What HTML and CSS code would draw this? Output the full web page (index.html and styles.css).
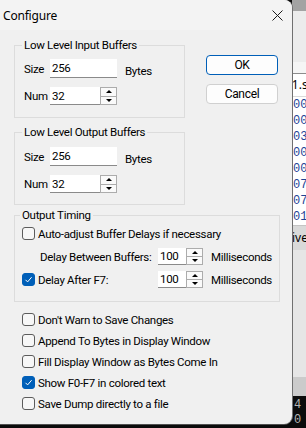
FILE: index.html
```html
<!DOCTYPE html>
<html lang="en">
<head>
    <meta charset="UTF-8">
    <meta name="viewport" content="width=device-width, initial-scale=1.0">
    <title>Configure</title>
    <link rel="stylesheet" href="styles.css">
</head>
<body>
    <div class="screen">
        <div class="dialog">
            <div class="titlebar">
                <span class="title">Configure</span>
                <svg class="close" width="11" height="11" viewBox="0 0 11 11">
                    <path d="M0.5 0.5 L10.5 10.5 M10.5 0.5 L0.5 10.5" stroke="#1b1b1b" stroke-width="1" fill="none"/>
                </svg>
            </div>
            <div class="content">
                <div class="top">
                    <div class="groups">
                        <fieldset class="group buffers">
                            <legend>Low Level Input Buffers</legend>
                            <div class="row first">
                                <label class="lbl">Size</label>
                                <input class="edit wide" value="256">
                                <span class="unit">Bytes</span>
                            </div>
                            <div class="row second">
                                <label class="lbl">Num</label>
                                <input class="edit narrow" value="32">
                                <span class="spin"><span class="up"></span><span class="down"></span></span>
                            </div>
                        </fieldset>
                        <fieldset class="group buffers out">
                            <legend>Low Level Output Buffers</legend>
                            <div class="row first">
                                <label class="lbl">Size</label>
                                <input class="edit wide" value="256">
                                <span class="unit">Bytes</span>
                            </div>
                            <div class="row second">
                                <label class="lbl">Num</label>
                                <input class="edit narrow" value="32">
                                <span class="spin"><span class="up"></span><span class="down"></span></span>
                            </div>
                        </fieldset>
                    </div>
                    <div class="buttons">
                        <button class="btn default">OK</button>
                        <button class="btn">Cancel</button>
                    </div>
                </div>

                <fieldset class="group timing">
                    <legend>Output Timing</legend>
                    <div class="check-row auto">
                        <span class="box"></span>
                        <span>Auto-adjust Buffer Delays if necessary</span>
                    </div>
                    <div class="delay-row between">
                        <span class="delay-label indent">Delay Between Buffers:</span>
                        <input class="edit delay" value="100">
                        <span class="spin small"><span class="up"></span><span class="down"></span></span>
                        <span class="unit">Milliseconds</span>
                    </div>
                    <div class="delay-row after">
                        <span class="delay-label"><span class="box checked"><svg width="11" height="11" viewBox="0 0 11 11"><path d="M2.5 5.8 L4.6 7.9 L8.6 3.2" stroke="#fff" stroke-width="1" fill="none"/></svg></span>Delay After F7:</span>
                        <input class="edit delay" value="100">
                        <span class="spin small"><span class="up"></span><span class="down"></span></span>
                        <span class="unit">Milliseconds</span>
                    </div>
                </fieldset>

                <div class="options">
                    <div class="check-row"><span class="box"></span><span>Don't Warn to Save Changes</span></div>
                    <div class="check-row"><span class="box"></span><span>Append To Bytes in Display Window</span></div>
                    <div class="check-row"><span class="box"></span><span>Fill Display Window as Bytes Come In</span></div>
                    <div class="check-row"><span class="box checked"><svg width="11" height="11" viewBox="0 0 11 11"><path d="M2.5 5.8 L4.6 7.9 L8.6 3.2" stroke="#fff" stroke-width="1" fill="none"/></svg></span><span>Show F0-F7 in colored text</span></div>
                    <div class="check-row"><span class="box"></span><span>Save Dump directly to a file</span></div>
                </div>
            </div>
        </div>

        <!-- window behind the dialog -->
        <div class="backdrop">
            <div class="bg-desk"></div>
            <div class="bg-bar"></div>
            <div class="bg-tabs"></div>
            <div class="bg-head">01.s</div>
            <div class="bg-rows">
                <div>00</div>
                <div>00</div>
                <div>03</div>
                <div>00</div>
                <div>00</div>
                <div>07</div>
                <div>07</div>
                <div>01</div>
            </div>
            <div class="bg-status">ive</div>
            <div class="bg-panel"></div>
            <div class="bg-edge"></div>
            <div class="bg-console">
                <div>4</div>
                <div>0</div>
            </div>
        </div>
    </div>
</body>
</html>
```

FILE: styles.css
```css
* {
    box-sizing: border-box;
}
body {
    margin: 0;
    background: #0b0b0b;
    font-family: Roboto, "Liberation Sans", Arial, sans-serif;
    font-size: 11.5px;
    letter-spacing: -0.3px;
    color: #000;
}
.screen {
    display: flex;
    width: 306px;
    height: 428px;
    overflow: hidden;
}
.dialog {
    width: 292px;
    height: 424px;
    flex: none;
    background: #f0f0f0;
    border-radius: 0 8px 8px 0;
    box-shadow: 1px 0 0 #707070, 0 1px 0 #505050;
    position: relative;
    z-index: 1;
    display: flex;
    flex-direction: column;
    white-space: nowrap;
}
.titlebar {
    height: 30px;
    flex: none;
    background: #f3f3f3;
    border-radius: 0 8px 0 0;
    display: flex;
    align-items: center;
    justify-content: space-between;
    padding: 0 9px 0 3px;
}
.title {
    font-family: "Noto Sans", "Open Sans", sans-serif;
    font-size: 12px;
    letter-spacing: -0.2px;
}
.close {
    display: block;
}
.content {
    padding: 8px 0 0 14px;
}
.top {
    display: flex;
}
.groups {
    width: 171px;
    display: flex;
    flex-direction: column;
    gap: 7px;
}
.group {
    margin: 0;
    min-width: 0;
    border: 1px solid #dcdcdc;
    padding: 0 0 12px 9px;
}
.group legend {
    padding: 0 2px;
    margin-left: -2px;
    line-height: 14px;
}
.group.out {
    padding-bottom: 11px;
}
.row {
    display: flex;
    align-items: center;
}
.row.first {
    height: 19px;
    margin-top: 7px;
}
.out .row.first {
    margin-top: 8px;
}
.row.second {
    height: 18px;
    margin-top: 9px;
}
.lbl {
    width: 26px;
}
.edit {
    font: inherit;
    letter-spacing: inherit;
    color: #000;
    background: #fff;
    border: none;
    border-bottom: 1px solid #8a8a8a;
    padding: 0 2px;
    margin: 0;
    outline: none;
}
.edit.wide {
    width: 67px;
    height: 19px;
}
.edit.narrow {
    width: 50px;
    height: 18px;
}
.unit {
    margin-left: 8px;
}
.row .unit {
    padding-top: 4px;
}
.spin {
    width: 17px;
    height: 18px;
    border: 1px solid #acacac;
    background: #fafafa;
    display: flex;
    flex-direction: column;
}
.spin.small {
    height: 17px;
}
.spin .up, .spin .down {
    flex: 1;
    display: flex;
    align-items: center;
    justify-content: center;
}
.spin .up {
    border-bottom: 1px solid #acacac;
}
.spin .up::after {
    content: "";
    border-left: 3px solid transparent;
    border-right: 3px solid transparent;
    border-bottom: 3px solid #000;
}
.spin .down::after {
    content: "";
    border-left: 3px solid transparent;
    border-right: 3px solid transparent;
    border-top: 3px solid #000;
}
.buttons {
    margin-left: 21px;
    padding-top: 17px;
    display: flex;
    flex-direction: column;
    gap: 9px;
}
.btn {
    width: 72px;
    height: 20px;
    font: inherit;
    letter-spacing: inherit;
    font-size: 12px;
    color: #000;
    background: #fdfdfd;
    border: 1px solid #d0d0d0;
    border-radius: 4px;
    padding: 0;
}
.btn.default {
    border-color: #005fb8;
}
.group.timing {
    width: 266px;
    margin-top: 3px;
    padding: 0 0 13px 7px;
}
.check-row {
    display: flex;
    align-items: center;
}
.check-row.auto {
    height: 15px;
    margin-top: 4px;
}
.box {
    width: 13px;
    height: 13px;
    flex: none;
    border: 1px solid #5c5c5c;
    border-radius: 3px;
    background: #f7f7f7;
    margin-right: 3px;
    display: inline-flex;
    align-items: center;
    justify-content: center;
}
.box.checked {
    background: #005fb8;
    border-color: #005fb8;
}
.box svg {
    display: block;
}
.delay-row {
    display: flex;
    align-items: center;
    height: 17px;
}
.delay-row.between {
    margin-top: 7px;
}
.delay-row.after {
    margin-top: 6px;
}
.delay-label {
    width: 136px;
    display: flex;
    align-items: center;
}
.delay-label.indent {
    padding-left: 18px;
}
.edit.delay {
    width: 28px;
    height: 17px;
}
.options {
    margin-top: 7px;
    padding-left: 8px;
}
.options .check-row {
    height: 21px;
}

/* window behind the dialog */
.backdrop {
    width: 14px;
    flex: none;
    display: flex;
    flex-direction: column;
    overflow: hidden;
    white-space: nowrap;
    letter-spacing: 0;
}
.bg-desk {
    height: 11px;
    background: #a3a3a3;
}
.bg-bar {
    height: 51px;
    background: #ececec;
}
.bg-tabs {
    height: 11px;
    background: #f5f5f5;
}
.bg-head {
    height: 24px;
    border-top: 1px solid #8c8c8c;
    border-bottom: 1px solid #dadada;
    background: #fff;
    font-family: "Noto Sans", sans-serif;
    font-size: 12px;
    line-height: 22px;
    text-indent: -7px;
}
.bg-rows {
    background: #fff;
    font-family: "Liberation Mono", monospace;
    font-size: 12px;
    color: #1f4496;
    padding-left: 1px;
}
.bg-rows div {
    height: 16px;
    line-height: 16px;
}
.bg-status {
    height: 25px;
    background: #d9d9d9;
    border-top: 1px solid #c4c4c4;
    font-family: "Noto Sans", sans-serif;
    font-size: 12px;
    line-height: 23px;
}
.bg-panel {
    height: 127px;
    background: #e6e6e6;
}
.bg-edge {
    height: 19px;
    background: #cbcbcb;
}
.bg-console {
    flex: 1;
    background: #0c0c0c;
    color: #b4b4b4;
    font-family: "Liberation Mono", monospace;
    font-size: 12px;
    padding: 2px 0 0 2px;
}
.bg-console div {
    height: 15px;
    line-height: 15px;
}
```
